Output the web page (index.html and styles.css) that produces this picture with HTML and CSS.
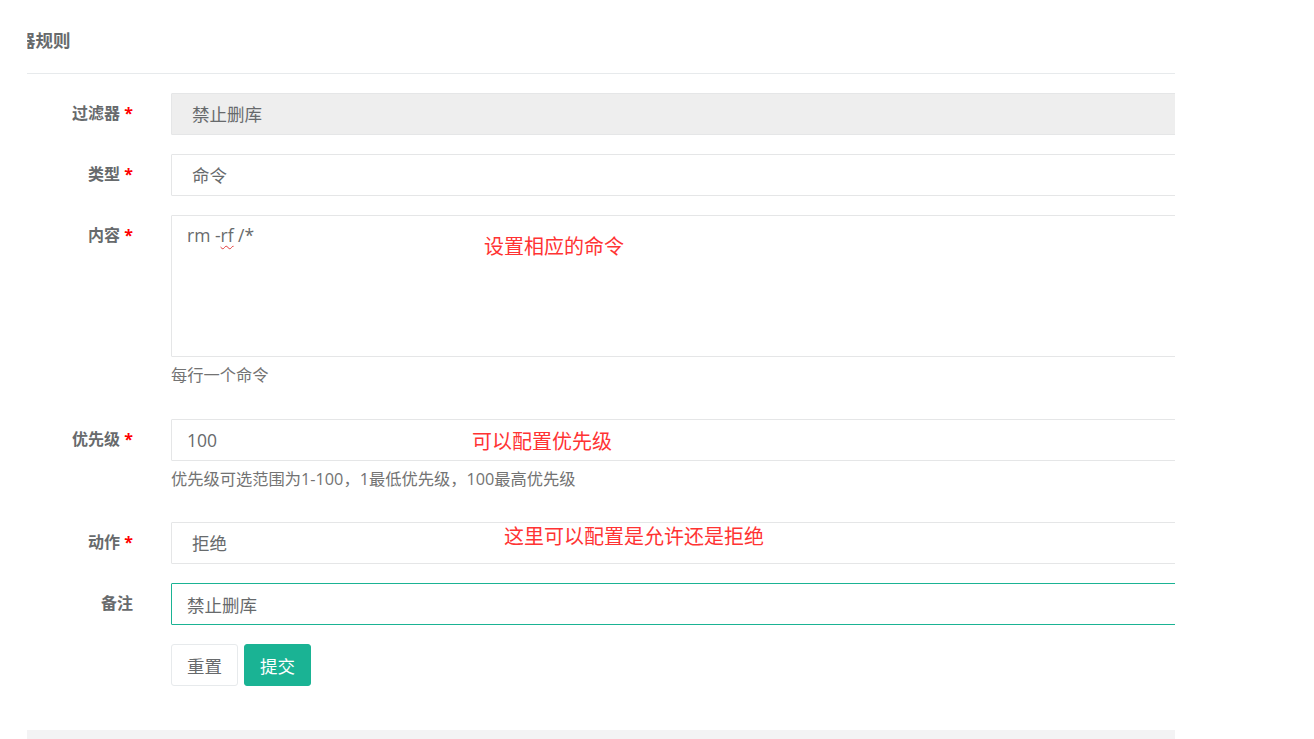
FILE: index.html
```html
<!DOCTYPE html>
<html lang="zh-CN">
<head>
<meta charset="utf-8">
<title>编辑过滤器规则</title>
<link rel="stylesheet" href="styles.css">
</head>
<body>
<div class="page">
  <div class="ibox">
    <div class="ibox-title"><h5>器规则</h5></div>
    <div class="ibox-content">
      <form class="form">
        <div class="group">
          <label class="label">过滤器 <span class="req">*</span></label>
          <div class="field">
            <select class="control select is-disabled" disabled><option>禁止删库</option></select>
          </div>
        </div>
        <div class="group">
          <label class="label">类型 <span class="req">*</span></label>
          <div class="field">
            <select class="control select"><option>命令</option></select>
          </div>
        </div>
        <div class="group">
          <label class="label">内容 <span class="req">*</span></label>
          <div class="field">
            <div class="control textarea" role="textbox">rm -<span class="spell">rf</span> /*</div>
            <p class="help">每行一个命令</p>
            <span class="note note-content">设置相应的命令</span>
          </div>
        </div>
        <div class="group">
          <label class="label">优先级 <span class="req">*</span></label>
          <div class="field">
            <input class="control input" type="text" value="100">
            <p class="help">优先级可选范围为1-100，1最低优先级，100最高优先级</p>
            <span class="note note-priority">可以配置优先级</span>
          </div>
        </div>
        <div class="group">
          <label class="label">动作 <span class="req">*</span></label>
          <div class="field">
            <select class="control select"><option>拒绝</option></select>
            <span class="note note-action">这里可以配置是允许还是拒绝</span>
          </div>
        </div>
        <div class="group">
          <label class="label">备注</label>
          <div class="field">
            <input class="control input is-focus" type="text" value="禁止删库">
          </div>
        </div>
        <div class="group group-last">
          <div class="actions">
            <button type="button" class="btn btn-white">重置</button>
            <button type="button" class="btn btn-primary">提交</button>
          </div>
        </div>
      </form>
    </div>
  </div>
  <div class="footer-bar"></div>
</div>
</body>
</html>
```
FILE: styles.css
```css
html, body {
  margin: 0;
  padding: 0;
  background: #ffffff;
  overflow: hidden;
}

body {
  font-family: "Open Sans", "Noto Sans CJK SC", sans-serif;
  color: #676a6c;
}

.page {
  margin: 0 139px 0 27px;
}

.ibox {
  overflow: hidden;
  background: #ffffff;
}

.ibox-title {
  padding: 30px 0 22px;
  border-bottom: 1px solid #e7eaec;
}

.ibox-title h5 {
  margin: 0 0 0 -9px;
  font-size: 17.5px;
  line-height: 21px;
  font-weight: 700;
  color: #676a6c;
}

.ibox-content {
  padding: 19px 0 44px;
}

.form {
  margin: 0;
}

.group {
  display: grid;
  grid-template-columns: 106px 1fr;
  column-gap: 38px;
  margin-bottom: 19px;
}

.group-last {
  margin-bottom: 0;
}

.label {
  text-align: right;
  padding-top: 9px;
  font-size: 16px;
  line-height: 23px;
  font-weight: 700;
  color: #676a6c;
  white-space: nowrap;
}

.req {
  color: #ff0000;
}

.field {
  position: relative;
  min-width: 0;
}

.control {
  display: block;
  box-sizing: border-box;
  width: calc(100% + 30px);
  height: 42px;
  margin: 0;
  border: 1px solid #e5e6e7;
  border-radius: 1px;
  background: #ffffff;
  font-family: "Open Sans", "Noto Sans CJK SC", sans-serif;
  font-size: 17.5px;
  color: #676a6c;
  outline: none;
}

.select {
  appearance: none;
  -webkit-appearance: none;
  padding: 0 20px;
}

.is-disabled {
  background: #eeeeee;
  color: #676a6c;
  opacity: 1;
}

.input {
  padding: 0 15px;
}

.is-focus {
  border-color: #1ab394;
}

.textarea {
  height: 142px;
  padding: 7px 15px;
  line-height: 25px;
}

.spell {
  text-decoration: underline wavy #e23c3c;
  text-decoration-thickness: 1px;
  text-underline-offset: 3px;
}

.help {
  margin: 7px 0 12.5px;
  font-size: 16.25px;
  line-height: 23px;
  color: #737373;
}

.note {
  position: absolute;
  font-size: 20px;
  line-height: 20px;
  color: #ff3333;
  white-space: nowrap;
}

.note-content {
  left: 313px;
  top: 22px;
}

.note-priority {
  left: 301px;
  top: 13px;
}

.note-action {
  left: 333px;
  top: 5px;
}

.actions {
  grid-column: 2;
  display: flex;
  gap: 6px;
}

.btn {
  box-sizing: border-box;
  height: 42px;
  padding: 0 15px;
  border: 1px solid #e7eaec;
  border-radius: 3px;
  font-family: "Open Sans", "Noto Sans CJK SC", sans-serif;
  font-size: 17.5px;
  cursor: pointer;
}

.btn-white {
  background: #ffffff;
  color: #676a6c;
}

.btn-primary {
  background: #1ab394;
  border-color: #1ab394;
  color: #ffffff;
}

.footer-bar {
  height: 9px;
  background: #f3f3f4;
}
```
